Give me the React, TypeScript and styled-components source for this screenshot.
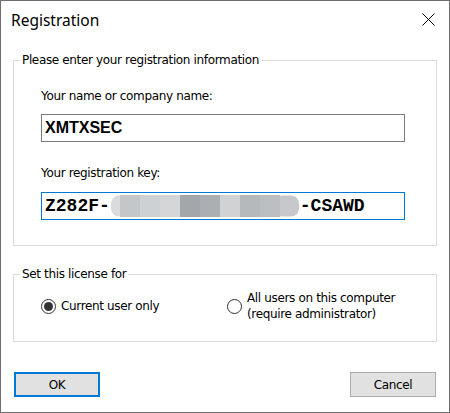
import React from "react";
import styled, { createGlobalStyle } from "styled-components";

const Global = createGlobalStyle`
  html, body { margin: 0; padding: 0; background: #ffffff; }
  body { font-family: "DejaVu Sans", "Liberation Sans", sans-serif; font-size: 12px; color: #000; }
  * { box-sizing: border-box; }
`;

const Window = styled.div`
  width: 450px;
  height: 413px;
  border: 1px solid #6e6e6e;
  background: #ffffff;
  display: flex;
  flex-direction: column;
`;

const TitleBar = styled.div`
  height: 37px;
  display: flex;
  align-items: center;
  justify-content: space-between;
  padding: 0 14px 0 10px;
`;

const Title = styled.div`
  font-family: "Noto Sans", "Open Sans", sans-serif;
  font-size: 15.5px;
  line-height: 20px;
  color: #000;
`;

const CloseButton = styled.div`
  width: 13px;
  height: 13px;
  display: flex;
`;

const Body = styled.div`
  flex: 1;
  display: flex;
  flex-direction: column;
  padding: 15px 12px 15px 12px;
`;

const Group = styled.fieldset<{ $gap?: number }>`
  margin: ${(p) => p.$gap ?? 0}px 0 0 0;
  padding: 0;
  border: 1px solid #dcdcdc;
  min-width: 0;
`;

const Legend = styled.legend`
  margin-left: 6px;
  padding: 0 2px;
  line-height: 14px;
  letter-spacing: -0.35px;
`;

const GroupContent = styled.div<{ $top: number; $bottom: number }>`
  display: flex;
  flex-direction: column;
  padding: ${(p) => p.$top}px 31px ${(p) => p.$bottom}px 27px;
`;

const FieldLabel = styled.div<{ $top?: number }>`
  line-height: 15px;
  letter-spacing: -0.35px;
  margin-top: ${(p) => p.$top ?? 0}px;
`;

const NameField = styled.div<{ $top: number }>`
  width: 364px;
  height: 28px;
  margin-top: ${(p) => p.$top}px;
  border: 1px solid #7a7a7a;
  display: flex;
  align-items: center;
  padding-left: 3px;
  font-family: "Liberation Sans", Arial, sans-serif;
  font-weight: bold;
  font-size: 16px;
`;

const KeyField = styled.div<{ $top: number }>`
  width: 364px;
  height: 28px;
  margin-top: ${(p) => p.$top}px;
  border: 1px solid #0078d7;
  display: flex;
  align-items: center;
  padding-left: 3px;
  font-family: "Liberation Mono", "Courier New", monospace;
  font-weight: bold;
  font-size: 18px;
`;

const KeyPart = styled.span`
  line-height: 20px;
`;

const Redaction = styled.svg`
  display: block;
  flex: none;
`;

const RadioRow = styled.div`
  display: grid;
  grid-template-columns: 186px 1fr;
  align-items: center;
`;

const RadioOption = styled.label`
  display: flex;
  align-items: center;
  gap: 5px;
  line-height: 15.5px;
  letter-spacing: -0.35px;
`;

const RadioCircle = styled.span<{ $checked?: boolean }>`
  width: 15px;
  height: 15px;
  flex: none;
  border-radius: 50%;
  border: 1px solid #333333;
  display: flex;
  align-items: center;
  justify-content: center;
  &::after {
    content: "";
    width: 9px;
    height: 9px;
    border-radius: 50%;
    background: ${(p) => (p.$checked ? "#333333" : "transparent")};
  }
`;

const Footer = styled.div`
  margin-top: auto;
  display: flex;
  justify-content: space-between;
  padding: 0 1px;
`;

const Button = styled.div<{ $primary?: boolean }>`
  width: 86px;
  height: 25px;
  background: #e1e1e1;
  border: ${(p) => (p.$primary ? "2px solid #0078d7" : "1px solid #adadad")};
  display: flex;
  align-items: center;
  justify-content: center;
  letter-spacing: -0.35px;
`;

const blocks = [
  ["#c4c7ca", 10],
  ["#ced1d4", 30],
  ["#d3d5d7", 50],
  ["#a3a6aa", 70],
  ["#abaeb2", 90],
  ["#d0d2d4", 110],
  ["#b6b9bc", 130],
  ["#bcbfc2", 150],
] as const;

const BlurredKey = () => (
  <Redaction width="190" height="24" viewBox="0 0 190 24">
    <defs>
      <filter id="soft" x="-5%" y="-20%" width="110%" height="140%">
        <feGaussianBlur stdDeviation="0.7" />
      </filter>
    </defs>
    <g filter="url(#soft)">
      <rect x="1" y="1.5" width="24" height="21" rx="8" fill="#d9dbdd" />
      <rect x="164" y="1.5" width="25" height="21" rx="8" fill="#c6c8cb" />
      {blocks.map(([c, x]) => (
        <rect key={x} x={x} y={1} width={20} height={22} fill={c} />
      ))}
    </g>
  </Redaction>
);

export default function App() {
  return (
    <>
      <Global />
      <Window>
        <TitleBar>
          <Title>Registration</Title>
          <CloseButton>
            <svg width="13" height="13" viewBox="0 0 13 13">
              <path d="M0.5 0.5 L12.5 12.5 M12.5 0.5 L0.5 12.5" stroke="#000" strokeWidth="1" />
            </svg>
          </CloseButton>
        </TitleBar>
        <Body>
          <Group>
            <Legend>Please enter your registration information</Legend>
            <GroupContent $top={22} $bottom={25}>
              <FieldLabel>Your name or company name:</FieldLabel>
              <NameField $top={10}>XMTXSEC</NameField>
              <FieldLabel $top={24}>Your registration key:</FieldLabel>
              <KeyField $top={11}>
                <KeyPart>Z282F-</KeyPart>
                <BlurredKey />
                <KeyPart>-CSAWD</KeyPart>
              </KeyField>
            </GroupContent>
          </Group>
          <Group $gap={21}>
            <Legend>Set this license for</Legend>
            <GroupContent $top={10} $bottom={19}>
              <RadioRow>
                <RadioOption>
                  <RadioCircle $checked />
                  <span>Current user only</span>
                </RadioOption>
                <RadioOption>
                  <RadioCircle />
                  <span>
                    All users on this computer
                    <br />
                    (require administrator)
                  </span>
                </RadioOption>
              </RadioRow>
            </GroupContent>
          </Group>
          <Footer>
            <Button $primary>OK</Button>
            <Button>Cancel</Button>
          </Footer>
        </Body>
      </Window>
    </>
  );
}
